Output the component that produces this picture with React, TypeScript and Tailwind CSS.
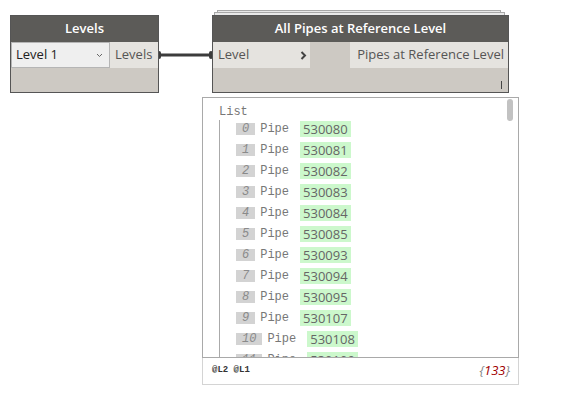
import React from 'react';

const items = [
  '530080', '530081', '530082', '530083', '530084', '530085',
  '530093', '530094', '530095', '530107', '530108', '530109',
];

const ui = { fontFamily: '"Open Sans", "Noto Sans", sans-serif' };
const mono = { fontFamily: '"Liberation Mono", "DejaVu Sans Mono", monospace' };

function NodeHeader({ title }: { title: string }) {
  return (
    <div className="h-[26px] bg-[#5c5b58] text-white text-[13px] font-semibold flex items-center justify-center">
      {title}
    </div>
  );
}

export default function App() {
  return (
    <div className="relative w-[570px] h-[396px] bg-white overflow-hidden" style={ui}>
      {/* wire */}
      <svg className="absolute left-0 top-0" width="570" height="396">
        <line x1="158" y1="55" x2="212" y2="55" stroke="#3c3c3c" strokeWidth="3" />
        <rect x="157" y="51" width="4" height="8" rx="2" fill="#3c3c3c" />
        <rect x="209" y="51" width="4" height="8" rx="2" fill="#3c3c3c" />
      </svg>

      {/* Levels node */}
      <div className="absolute left-[10px] top-[15px] w-[149px] h-[78px] border border-[#555] flex flex-col">
        <NodeHeader title="Levels" />
        <div className="h-[26px] flex">
          <div className="w-[99px] bg-[#efefef] border border-[#b5b5b5] flex items-center justify-between pl-[4px] pr-[6px] text-[13px] text-[#222]">
            <span>Level 1</span>
            <svg width="7" height="5" viewBox="0 0 7 5">
              <path d="M1 1 L3.5 3.5 L6 1" stroke="#666" strokeWidth="1" fill="none" />
            </svg>
          </div>
          <div className="flex-1 bg-[#e5e3df] flex items-center pl-[5px] text-[13px] text-[#555]">Levels</div>
        </div>
        <div className="flex-1 bg-[#cdc9c3]" />
      </div>

      {/* stacked outline of custom node */}
      <div className="absolute left-[217px] top-[10px] w-[284px] h-[8px] border border-[#a8a8a8] bg-[#e9e9e9]" />
      <div className="absolute left-[214px] top-[12px] w-[291px] h-[8px] border border-[#a8a8a8] bg-[#e9e9e9]" />

      {/* All Pipes node */}
      <div className="absolute left-[212px] top-[15px] w-[297px] h-[78px] border border-[#555] flex flex-col">
        <NodeHeader title="All Pipes at Reference Level" />
        <div className="h-[26px] flex bg-[#cdc9c3]">
          <div className="w-[97px] bg-[#e5e3df] flex items-center justify-between pl-[5px] pr-[3px] text-[13px] text-[#555]">
            <span>Level</span>
            <svg width="7" height="9" viewBox="0 0 7 9">
              <path d="M1.5 1 L5 4.5 L1.5 8" stroke="#444" strokeWidth="2" fill="none" />
            </svg>
          </div>
          <div className="w-[40px]" />
          <div className="flex-1 bg-[#e5e3df] flex items-center justify-end pr-[4px] text-[13px] text-[#555]">
            Pipes at Reference Level
          </div>
        </div>
        <div className="flex-1 bg-[#cdc9c3] flex items-end justify-end pr-[6px] pb-[3px]">
          <div className="w-px h-[8px] bg-[#444]" />
        </div>
      </div>

      {/* Watch panel */}
      <div className="absolute left-[202px] top-[97px] w-[317px] h-[288px] flex flex-col">
        <div className="relative h-[261px] border border-[#a9a9a9] bg-white overflow-hidden">
          <div className="absolute right-[5px] top-[1px] w-[6px] h-[22px] rounded-full bg-[#c2c2c2]" />
          <div className="pl-[16px] pt-[7px] text-[12px] text-[#777] leading-[14px]" style={mono}>List</div>
          <div className="ml-[16px] mt-[1px] border-l border-[#aaa] pl-[16px] pt-[1px] flex flex-col gap-[5px]">
            {items.map((v, i) => (
              <div key={i} className="flex items-center h-[16px]">
                <span
                  className="h-[12px] bg-[#d3d3d3] px-[6px] text-[12px] leading-[12px] italic text-[#8a8a8a] text-right"
                  style={mono}
                >
                  {i}
                </span>
                <span className="ml-[5px] text-[12px] text-[#777]" style={mono}>Pipe</span>
                <span className="ml-[11px] h-[16px] bg-[#ccf8cc] px-[3px] text-[13px] leading-[16px] text-[#666]">{v}</span>
              </div>
            ))}
          </div>
        </div>
        <div className="flex-1 border border-t-0 border-[#d4d4d4] flex items-center justify-between pl-[9px] pr-[8px]">
          <span className="text-[9px] font-bold text-[#333]" style={mono}>@L2 @L1</span>
          <span className="text-[13px] italic">
            <span className="text-[#888]">{'{'}</span>
            <span className="text-[#a00000]">133</span>
            <span className="text-[#888]">{'}'}</span>
          </span>
        </div>
      </div>
    </div>
  );
}
